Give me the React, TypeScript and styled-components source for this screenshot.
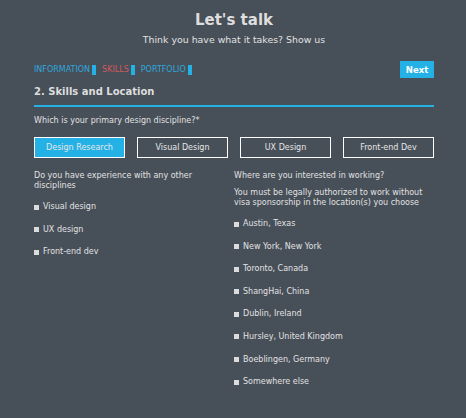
import React, { useState } from "react";
import styled, { createGlobalStyle } from "styled-components";

const GlobalStyle = createGlobalStyle`
  html, body {
    margin: 0;
    padding: 0;
    background: #474f59;
  }
  body {
    font-family: "DejaVu Sans", "Liberation Sans", sans-serif;
    color: #e2e2e2;
  }
`;

const Page = styled.div`
  width: 466px;
  height: 418px;
  box-sizing: border-box;
  padding: 8px 32px 0 34px;
  background: #474f59;
`;

const Title = styled.h1`
  margin: 0;
  text-align: center;
  font-size: 15px;
  line-height: 24px;
  font-weight: bold;
  color: #dedede;
`;

const Subtitle = styled.p`
  margin: 0;
  text-align: center;
  font-size: 9.4px;
  line-height: 16px;
  color: #e2e2e2;
`;

const TabBar = styled.div`
  display: flex;
  align-items: center;
  justify-content: space-between;
  margin-top: 13px;
  height: 17px;
`;

const Tabs = styled.div`
  display: flex;
  align-items: center;
  gap: 6px;
`;

const Tab = styled.span<{ $active?: boolean }>`
  display: flex;
  align-items: center;
  gap: 2px;
  font-size: 8px;
  text-transform: uppercase;
  color: ${(p) => (p.$active ? "#d35a5c" : "#2fa7dc")};
  &::after {
    content: "";
    width: 4px;
    height: 10px;
    background: #24b2e6;
  }
`;

const NextButton = styled.button`
  width: 34px;
  height: 17px;
  border: none;
  padding: 0;
  background: #24b2e6;
  color: #fff;
  font-family: inherit;
  font-size: 8.5px;
  font-weight: bold;
`;

const SectionTitle = styled.h2`
  margin: 7px 0 0;
  font-size: 10px;
  line-height: 14px;
  font-weight: bold;
  color: #dedede;
  padding-bottom: 6px;
  border-bottom: 2px solid #24b2e6;
`;

const Question = styled.p`
  margin: 8px 0 0;
  font-size: 8px;
  line-height: 11px;
`;

const Disciplines = styled.div`
  display: grid;
  grid-template-columns: repeat(4, 1fr);
  gap: 12px;
  margin-top: 11px;
`;

const Choice = styled.button<{ $selected?: boolean }>`
  height: 21px;
  padding: 0;
  box-sizing: border-box;
  border: 1px solid #fff;
  background: ${(p) => (p.$selected ? "#24b2e6" : "transparent")};
  color: #e6e6e6;
  font-family: inherit;
  font-size: 8px;
  cursor: pointer;
`;

const Columns = styled.div`
  display: grid;
  grid-template-columns: 1fr 1fr;
  margin-top: 13px;
`;

const Column = styled.div`
  display: flex;
  flex-direction: column;
`;

const Label = styled.p<{ $narrow?: boolean }>`
  margin: 0 0 7px;
  font-size: 8px;
  line-height: 10px;
  max-width: ${(p) => (p.$narrow ? "170px" : "none")};
`;

const List = styled.ul`
  list-style: none;
  margin: 4px 0 0;
  padding: 0;
  display: flex;
  flex-direction: column;
  gap: 12.6px;
`;

const Item = styled.li`
  display: flex;
  align-items: center;
  gap: 4px;
  font-size: 8px;
  line-height: 10px;
  &::before {
    content: "";
    width: 5px;
    height: 5px;
    background: #dcdcdc;
  }
`;

const disciplines = ["Design Research", "Visual Design", "UX Design", "Front-end Dev"];
const others = ["Visual design", "UX design", "Front-end dev"];
const locations = [
  "Austin, Texas",
  "New York, New York",
  "Toronto, Canada",
  "ShangHai, China",
  "Dublin, Ireland",
  "Hursley, United Kingdom",
  "Boeblingen, Germany",
  "Somewhere else",
];

export default function App() {
  const [selected, setSelected] = useState("Design Research");

  return (
    <>
      <GlobalStyle />
      <Page>
        <Title>Let's talk</Title>
        <Subtitle>Think you have what it takes? Show us</Subtitle>
        <TabBar>
          <Tabs>
            <Tab>Information</Tab>
            <Tab $active>Skills</Tab>
            <Tab>Portfolio</Tab>
          </Tabs>
          <NextButton>Next</NextButton>
        </TabBar>
        <SectionTitle>2. Skills and Location</SectionTitle>
        <Question>Which is your primary design discipline?*</Question>
        <Disciplines>
          {disciplines.map((d) => (
            <Choice key={d} $selected={d === selected} onClick={() => setSelected(d)}>
              {d}
            </Choice>
          ))}
        </Disciplines>
        <Columns>
          <Column>
            <Label $narrow>Do you have experience with any other disciplines</Label>
            <List>
              {others.map((o) => (
                <Item key={o}>{o}</Item>
              ))}
            </List>
          </Column>
          <Column>
            <Label>Where are you interested in working?</Label>
            <Label>You must be legally authorized to work without visa sponsorship in the location(s) you choose</Label>
            <List>
              {locations.map((l) => (
                <Item key={l}>{l}</Item>
              ))}
            </List>
          </Column>
        </Columns>
      </Page>
    </>
  );
}
